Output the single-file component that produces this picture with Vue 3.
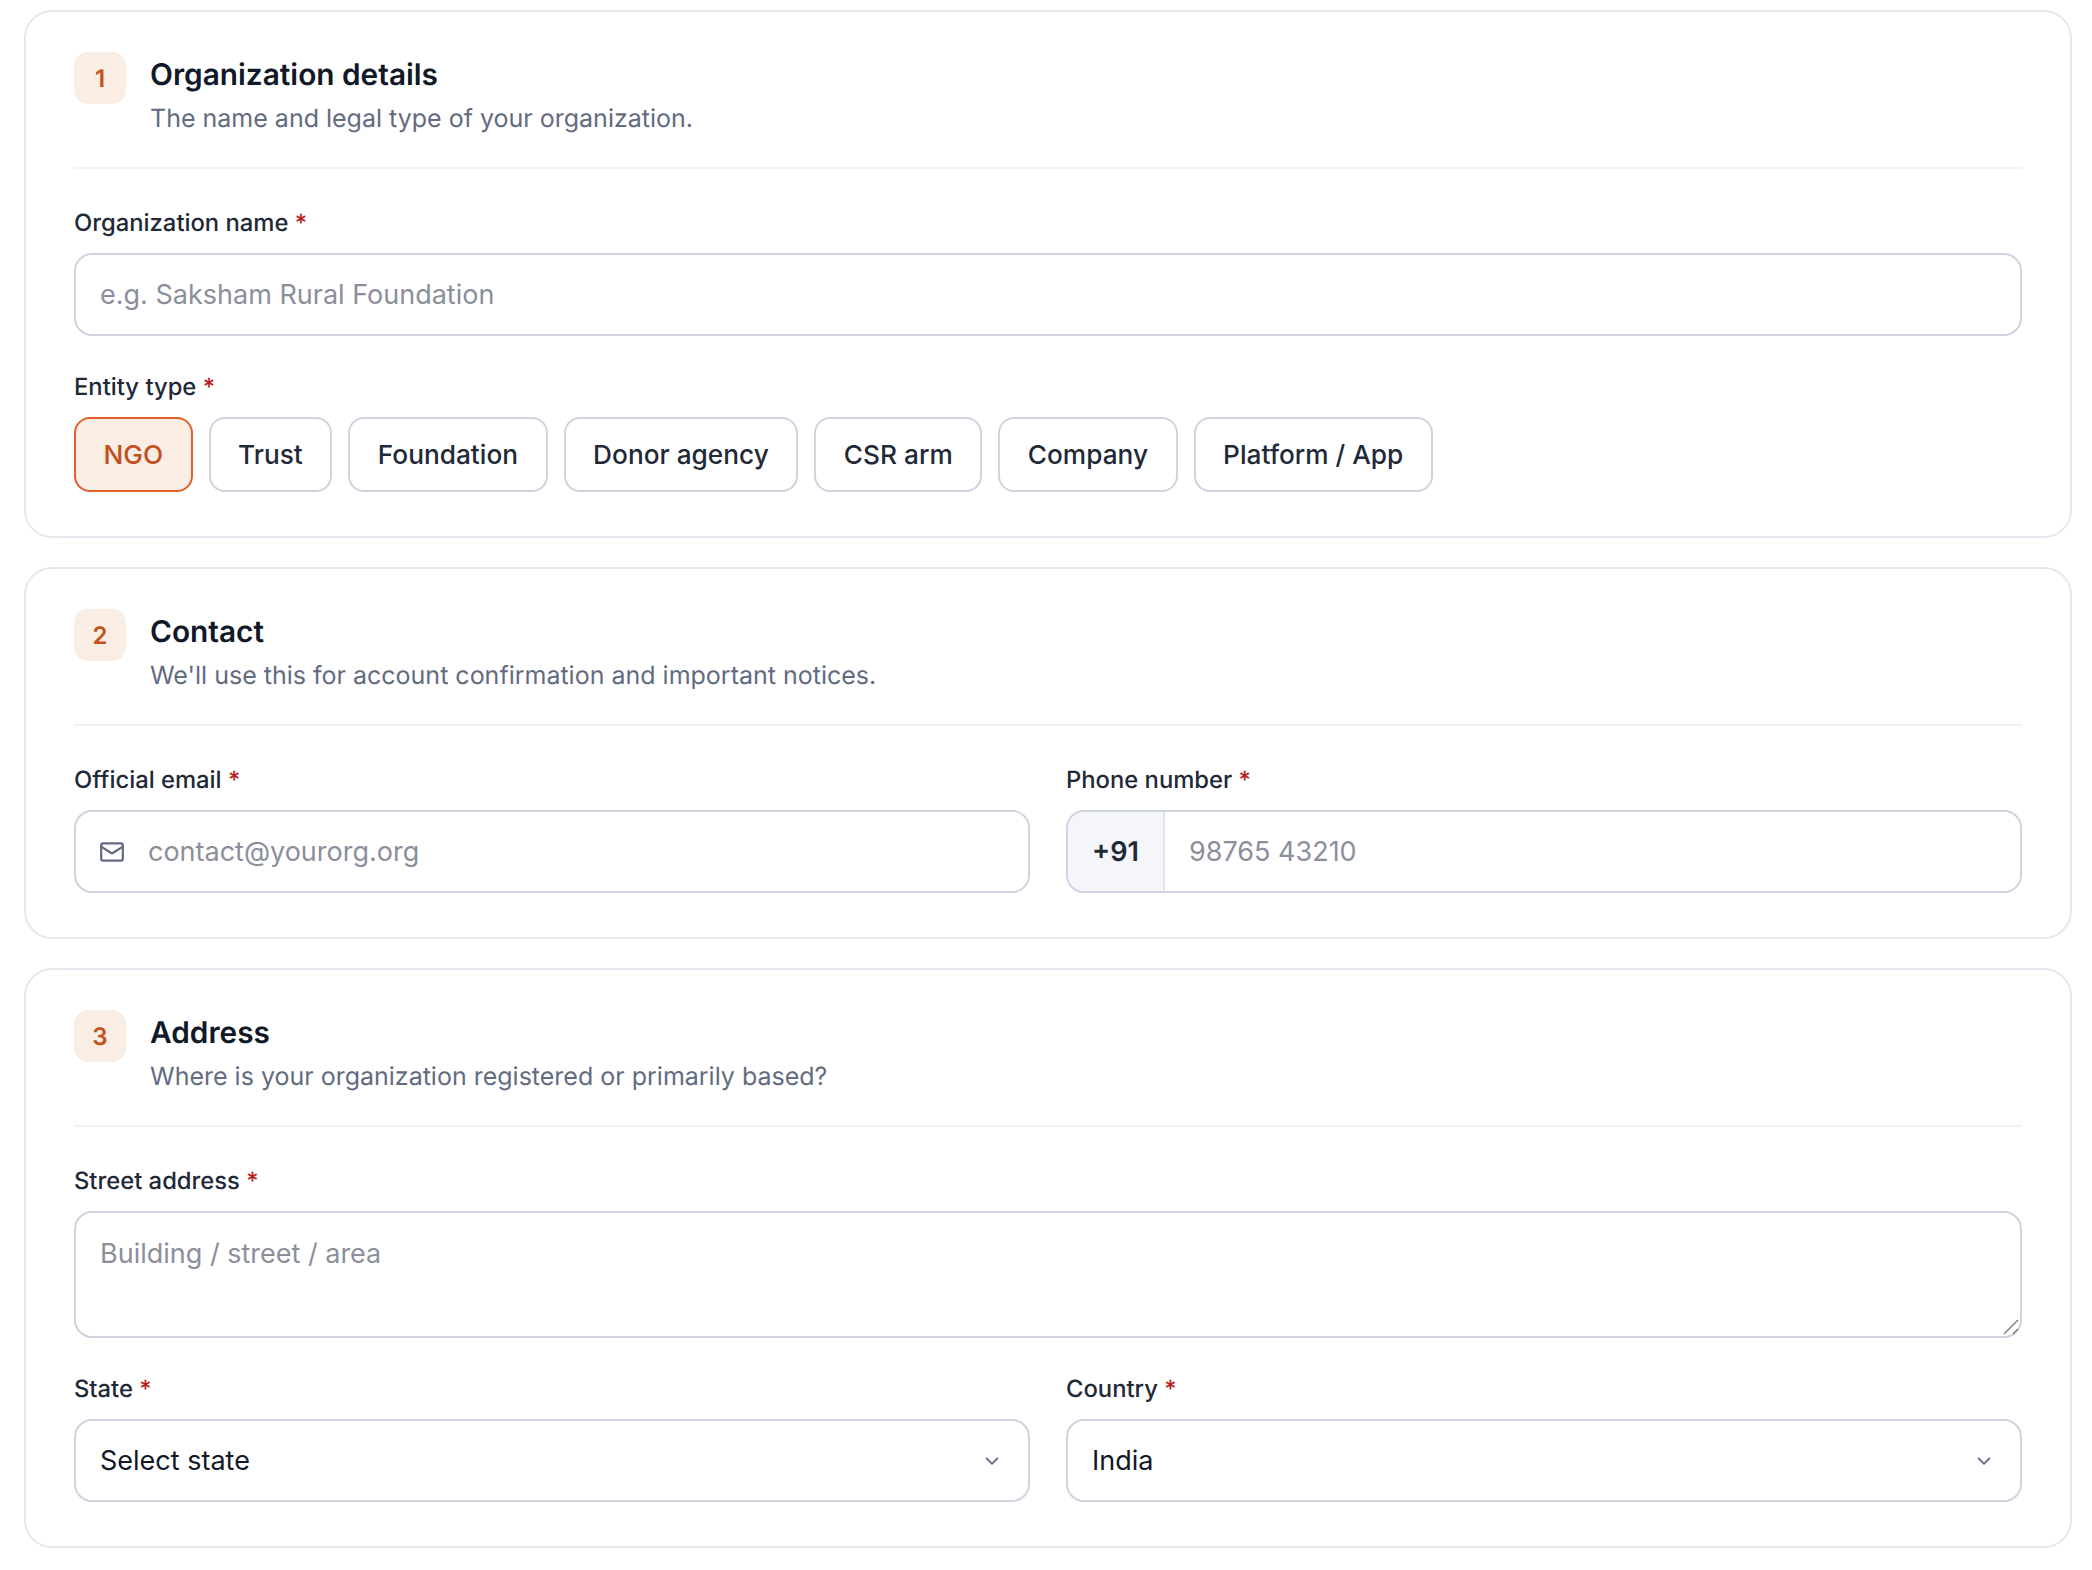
<script setup>
const entityTypes = ['NGO', 'Trust', 'Foundation', 'Donor agency', 'CSR arm', 'Company', 'Platform / App']
</script>

<template>
  <div class="page">
    <section class="card">
      <header class="card-head">
        <div class="step">1</div>
        <div>
          <h2>Organization details</h2>
          <p>The name and legal type of your organization.</p>
        </div>
      </header>
      <div class="field">
        <label>Organization name <span class="req">*</span></label>
        <input class="input" placeholder="e.g. Saksham Rural Foundation" />
      </div>
      <div class="field last">
        <label>Entity type <span class="req">*</span></label>
        <div class="chips">
          <button
            v-for="(t, i) in entityTypes"
            :key="t"
            class="chip"
            :class="{ active: i === 0 }"
          >{{ t }}</button>
        </div>
      </div>
    </section>

    <section class="card">
      <header class="card-head">
        <div class="step">2</div>
        <div>
          <h2>Contact</h2>
          <p>We'll use this for account confirmation and important notices.</p>
        </div>
      </header>
      <div class="row">
        <div class="field last">
          <label>Official email <span class="req">*</span></label>
          <div class="input-wrap">
            <svg class="mail" viewBox="0 0 24 24" fill="none" stroke="currentColor" stroke-width="2" stroke-linecap="round" stroke-linejoin="round">
              <rect x="2" y="4" width="20" height="16" rx="2" />
              <path d="M22 7l-8.97 5.7a1.94 1.94 0 0 1-2.06 0L2 7" />
            </svg>
            <input class="bare" placeholder="contact@yourorg.org" />
          </div>
        </div>
        <div class="field last">
          <label>Phone number <span class="req">*</span></label>
          <div class="input-wrap phone">
            <span class="prefix">+91</span>
            <input class="bare" placeholder="98765 43210" />
          </div>
        </div>
      </div>
    </section>

    <section class="card">
      <header class="card-head">
        <div class="step">3</div>
        <div>
          <h2>Address</h2>
          <p>Where is your organization registered or primarily based?</p>
        </div>
      </header>
      <div class="field">
        <label>Street address <span class="req">*</span></label>
        <div class="area-wrap">
          <textarea class="input area" placeholder="Building / street / area"></textarea>
          <svg class="grip" viewBox="0 0 16 16" fill="none" stroke="#77797f" stroke-width="1.4">
            <path d="M1 15L15 1M10 15l5-5" />
          </svg>
        </div>
      </div>
      <div class="row">
        <div class="field last">
          <label>State <span class="req">*</span></label>
          <div class="select-wrap">
            <select class="input select"><option>Select state</option></select>
            <svg class="chev" viewBox="0 0 24 24" fill="none" stroke="currentColor" stroke-width="2" stroke-linecap="round" stroke-linejoin="round"><path d="M6 9l6 6 6-6" /></svg>
          </div>
        </div>
        <div class="field last">
          <label>Country <span class="req">*</span></label>
          <div class="select-wrap">
            <select class="input select"><option>India</option></select>
            <svg class="chev" viewBox="0 0 24 24" fill="none" stroke="currentColor" stroke-width="2" stroke-linecap="round" stroke-linejoin="round"><path d="M6 9l6 6 6-6" /></svg>
          </div>
        </div>
      </div>
    </section>
  </div>
</template>

<style>
html, body {
  background: #fff;
}
</style>

<style scoped>
.page {
  display: flex;
  flex-direction: column;
  gap: 29px;
  padding: 10px 20px 23px 24px;
  font-family: Inter, "Liberation Sans", sans-serif;
  text-rendering: geometricPrecision;
  box-sizing: border-box;
  width: 2092px;
  height: 1570px;
}

.card {
  border: 2px solid #e6e7ee;
  border-radius: 28px;
  padding: 40px 48px 44px;
  background: #fff;
}

.card-head {
  display: flex;
  gap: 24px;
  padding-bottom: 26px;
  margin-bottom: 36px;
  border-bottom: 2px solid #f1f2f5;
}

.step {
  flex: none;
  width: 52px;
  height: 52px;
  border-radius: 14px;
  background: #faede4;
  color: #c2511a;
  font-size: 24px;
  font-weight: 600;
  display: flex;
  align-items: center;
  justify-content: center;
}

h2 {
  margin: 1px 0 0;
  font-size: 29.8px;
  line-height: 44px;
  font-weight: 600;
  color: #111827;
}

p {
  margin: 0;
  font-size: 25px;
  line-height: 44px;
  color: #626b80;
}

.field {
  display: flex;
  flex-direction: column;
  margin-bottom: 33px;
  min-width: 0;
}

.field.last {
  margin-bottom: 0;
}

label {
  font-size: 23.8px;
  line-height: 36px;
  font-weight: 500;
  color: #1f2937;
  margin-bottom: 12px;
}

.req {
  color: #b91c1c;
}

.input {
  box-sizing: border-box;
  width: 100%;
  height: 83px;
  border: 2.5px solid #cfd3e0;
  border-radius: 18px;
  padding: 0 24px;
  font-family: inherit;
  font-size: 27px;
  color: #111827;
  background: #fff;
  outline: none;
}

.input::placeholder,
.bare::placeholder {
  color: #8b8f9c;
  opacity: 1;
}

.chips {
  display: flex;
  gap: 16px;
}

.chip {
  height: 75px;
  padding: 0 27.5px;
  border: 2.5px solid #cfd3e0;
  border-radius: 16px;
  background: #fff;
  font-family: inherit;
  font-size: 26.25px;
  font-weight: 500;
  color: #1f2937;
}

.chip.active {
  background: #faede4;
  border-color: #e0622a;
  color: #c0501c;
}

.row {
  display: grid;
  grid-template-columns: 1fr 1fr;
  gap: 36px;
}

.input-wrap {
  box-sizing: border-box;
  display: flex;
  align-items: center;
  height: 83px;
  border: 2.5px solid #cfd3e0;
  border-radius: 18px;
  overflow: hidden;
}

.mail {
  flex: none;
  width: 26px;
  height: 26px;
  margin-left: 23px;
  color: #5f6b82;
}

.bare {
  flex: 1;
  min-width: 0;
  height: 100%;
  border: 0;
  outline: none;
  padding: 0 24px;
  font-family: inherit;
  font-size: 27px;
  color: #111827;
}

.input-wrap:not(.phone) .bare {
  padding-left: 23px;
}

.phone .prefix {
  flex: none;
  width: 97px;
  height: 100%;
  display: flex;
  align-items: center;
  justify-content: center;
  background: #f5f6f9;
  border-right: 2px solid #e3e5ec;
  font-size: 27px;
  font-weight: 600;
  color: #1f2937;
  box-sizing: border-box;
}

.area-wrap {
  position: relative;
  display: flex;
}

.area {
  height: 127px;
  padding: 22px 24px;
  resize: none;
  line-height: 1.4;
}

.grip {
  position: absolute;
  right: 3px;
  bottom: 3px;
  width: 16px;
  height: 16px;
}

.select-wrap {
  position: relative;
}

.select {
  display: block;
  appearance: none;
}

.chev {
  position: absolute;
  right: 27px;
  top: 50%;
  width: 22px;
  height: 22px;
  margin-top: -11px;
  color: #6b7286;
  pointer-events: none;
}
</style>
